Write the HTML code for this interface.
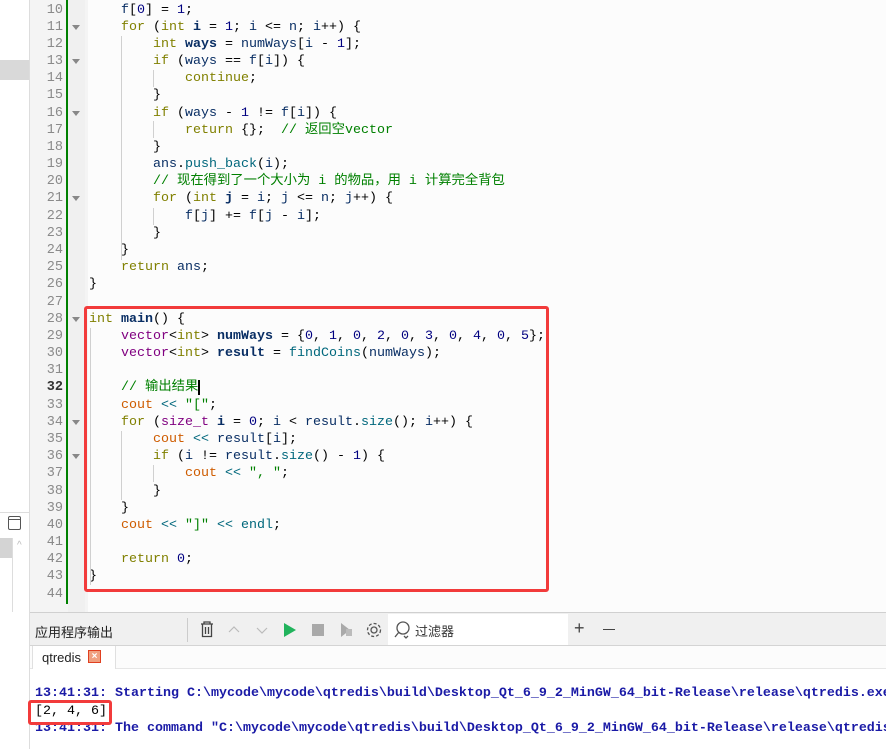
<!DOCTYPE html>
<html><head><meta charset="utf-8"><style>
body{margin:0;width:886px;height:749px;overflow:hidden;background:#fcfcfc;position:relative;font-family:"Liberation Sans","Noto Sans CJK SC",sans-serif}
.a{position:absolute}
.ln{position:absolute;left:30px;width:33px;text-align:right;font:13.5px "Liberation Mono",monospace;color:#8a8a8a;height:17px;line-height:17px}
.c{position:absolute;left:89px;white-space:pre;font:13.33px "Liberation Mono","Noto Sans CJK SC",monospace;color:#000;height:17px;line-height:17px}
.k{color:#808000}.v{color:#092e64}.b{color:#092e64;font-weight:bold}.n{color:#000080}.f{color:#00677c}.t{color:#800080}.o{color:#ce5c00}.s{color:#008000}.m{color:#008000}
.fold{position:absolute;left:72px;width:0;height:0;border-left:4px solid transparent;border-right:4px solid transparent;border-top:5px solid #888}
.g{position:absolute;width:1px;background:#d0d0d0}
.out{position:absolute;left:35px;white-space:pre;font:bold 13.33px "Liberation Mono",monospace;color:#1a1aa6}
</style></head><body>
<div class="a" style="left:0;top:0;width:29px;height:612px;background:#fff;border-right:1px solid #ddd"></div>
<div class="a" style="left:0;top:60px;width:29px;height:20px;background:#d9d9d9"></div>
<div class="a" style="left:0;top:512px;width:29px;height:1px;background:#ddd"></div>
<div class="a" style="left:8px;top:516px;width:11px;height:12px;border:1px solid #555;border-radius:2px"></div>
<div class="a" style="left:8px;top:519px;width:12px;height:1px;background:#555"></div>
<div class="a" style="left:0;top:538px;width:12px;height:20px;background:#d4d4d4"></div>
<div class="a" style="left:12px;top:538px;width:1px;height:74px;background:#ddd"></div>
<div class="a" style="left:17px;top:540px;font-size:10px;color:#bbb">^</div>
<div class="a" style="left:30px;top:0;width:58px;height:612px;background:#f4f4f4"></div>
<div class="a" style="left:66px;top:0;width:2px;height:604px;background:#008000"></div>
<div class="a" style="left:68px;top:0;width:17px;height:612px;background:#f0f0f0"></div>
<div class="a" style="left:0;top:612px;width:886px;height:1px;background:#d0d0d0"></div>

<div id="lines"></div>
<script>
var L=[
[10,'    <span class="v">f</span>[<span class="n">0</span>] = <span class="n">1</span>;'],
[11,'    <span class="k">for</span> (<span class="k">int</span> <span class="b">i</span> = <span class="n">1</span>; <span class="v">i</span> &lt;= <span class="v">n</span>; <span class="v">i</span>++) {',1],
[12,'        <span class="k">int</span> <span class="b">ways</span> = <span class="v">numWays</span>[<span class="v">i</span> - <span class="n">1</span>];'],
[13,'        <span class="k">if</span> (<span class="v">ways</span> == <span class="v">f</span>[<span class="v">i</span>]) {',1],
[14,'            <span class="k">continue</span>;'],
[15,'        }'],
[16,'        <span class="k">if</span> (<span class="v">ways</span> - <span class="n">1</span> != <span class="v">f</span>[<span class="v">i</span>]) {',1],
[17,'            <span class="k">return</span> {};  <span class="m">// 返回空vector</span>'],
[18,'        }'],
[19,'        <span class="v">ans</span>.<span class="f">push_back</span>(<span class="v">i</span>);'],
[20,'        <span class="m">// 现在得到了一个大小为 i 的物品，用 i 计算完全背包</span>'],
[21,'        <span class="k">for</span> (<span class="k">int</span> <span class="b">j</span> = <span class="v">i</span>; <span class="v">j</span> &lt;= <span class="v">n</span>; <span class="v">j</span>++) {',1],
[22,'            <span class="v">f</span>[<span class="v">j</span>] += <span class="v">f</span>[<span class="v">j</span> - <span class="v">i</span>];'],
[23,'        }'],
[24,'    }'],
[25,'    <span class="k">return</span> <span class="v">ans</span>;'],
[26,'}'],
[27,''],
[28,'<span class="k">int</span> <span class="b">main</span>() {',1],
[29,'    <span class="t">vector</span>&lt;<span class="k">int</span>&gt; <span class="b">numWays</span> = {<span class="n">0</span>, <span class="n">1</span>, <span class="n">0</span>, <span class="n">2</span>, <span class="n">0</span>, <span class="n">3</span>, <span class="n">0</span>, <span class="n">4</span>, <span class="n">0</span>, <span class="n">5</span>};'],
[30,'    <span class="t">vector</span>&lt;<span class="k">int</span>&gt; <span class="b">result</span> = <span class="f">findCoins</span>(<span class="v">numWays</span>);'],
[31,''],
[32,'    <span class="m">// 输出结果</span><span style="border-left:2px solid #000;margin-left:0"></span>'],
[33,'    <span class="o">cout</span> <span class="f">&lt;&lt;</span> <span class="s">"["</span>;'],
[34,'    <span class="k">for</span> (<span class="t">size_t</span> <span class="b">i</span> = <span class="n">0</span>; <span class="v">i</span> &lt; <span class="v">result</span>.<span class="f">size</span>(); <span class="v">i</span>++) {',1],
[35,'        <span class="o">cout</span> <span class="f">&lt;&lt;</span> <span class="v">result</span>[<span class="v">i</span>];'],
[36,'        <span class="k">if</span> (<span class="v">i</span> != <span class="v">result</span>.<span class="f">size</span>() - <span class="n">1</span>) {',1],
[37,'            <span class="o">cout</span> <span class="f">&lt;&lt;</span> <span class="s">", "</span>;'],
[38,'        }'],
[39,'    }'],
[40,'    <span class="o">cout</span> <span class="f">&lt;&lt;</span> <span class="s">"]"</span> <span class="f">&lt;&lt;</span> <span class="f">endl</span>;'],
[41,''],
[42,'    <span class="k">return</span> <span class="n">0</span>;'],
[43,'}'],
[44,'']];
var h='';
L.forEach(function(l){var t=1.5+(l[0]-10)*17.18;
h+='<div class="ln" style="top:'+t+'px;'+(l[0]==32?'color:#333;font-weight:bold':'')+'">'+l[0]+'</div>';
h+='<div class="c" style="top:'+t+'px">'+l[1]+'</div>';
if(l[2])h+='<div class="fold" style="top:'+(t+6)+'px"></div>';});
document.getElementById('lines').outerHTML=h;
</script>
<div class="g" style="left:121px;top:36px;height:224px"></div>
<div class="g" style="left:153px;top:70px;height:17px"></div>
<div class="g" style="left:153px;top:121px;height:17px"></div>
<div class="g" style="left:153px;top:208px;height:17px"></div>
<div class="g" style="left:90px;top:328px;height:257px"></div>
<div class="g" style="left:121px;top:431px;height:69px"></div>
<div class="g" style="left:153px;top:465px;height:17px"></div>
<div class="a" style="left:84px;top:306px;width:459px;height:280px;border:3px solid #f23b3b;border-radius:3px"></div>

<div class="a" style="left:30px;top:613px;width:856px;height:32px;background:#f0f0f0;border-bottom:1px solid #d4d4d4"></div>
<div class="a" style="left:35px;top:622px;font-size:13px;color:#222">应用程序输出</div>
<div class="a" style="left:187px;top:618px;width:1px;height:24px;background:#ccc"></div>
<svg class="a" style="left:198px;top:620px" width="190" height="20">
<g fill="none" stroke="#444" stroke-width="1.3"><path d="M3 4h12M6 4V2h6v2M4.5 4.5v12h9v-12M7.5 7v7M10.5 7v7"/></g>
<path d="M31 12l5-5 5 5M59 8l5 5 5-5" fill="none" stroke="#bbb" stroke-width="1.2"/>
<path d="M86 3v14l12-7z" fill="#21b35c"/>
<rect x="114" y="4" width="12" height="12" fill="#a9a9a9"/>
<path d="M143 3v14l9-7z" fill="#a9a9a9"/><rect x="148" y="9" width="6" height="7" fill="#bbb"/>
<g fill="none" stroke="#555" stroke-width="1.3"><circle cx="176" cy="10" r="3"/><circle cx="176" cy="10" r="6.5" stroke-dasharray="3 2"/></g>
</svg>
<div class="a" style="left:388px;top:614px;width:180px;height:31px;background:#fff"></div>
<svg class="a" style="left:393px;top:620px" width="18" height="20"><circle cx="10" cy="8" r="6" fill="none" stroke="#555" stroke-width="1.3"/><path d="M6 12l-4 5M11 16l2 2 2-2" fill="none" stroke="#555" stroke-width="1.3"/></svg>
<div class="a" style="left:415px;top:621px;font-size:13px;color:#333">过滤器</div>
<div class="a" style="left:574px;top:618px;font-size:18px;color:#444;line-height:20px">+</div>
<div class="a" style="left:603px;top:629px;width:12px;height:1px;background:#444"></div>
<div class="a" style="left:30px;top:646px;width:856px;height:22px;background:#fcfcfc;border-bottom:1px solid #e6e6e6"></div>
<div class="a" style="left:32px;top:646px;width:82px;height:23px;background:#fff;border-left:1px solid #e0e0e0;border-right:1px solid #e0e0e0"></div>
<div class="a" style="left:42px;top:650px;font-size:13px;color:#222">qtredis</div>
<div class="a" style="left:88px;top:650px;width:11px;height:11px;background:#f0a080;border:1px solid #e04020;color:#fff;font-size:10px;line-height:11px;text-align:center;font-weight:bold">×</div>
<div class="a" style="left:0;top:669px;width:886px;height:80px;background:#fff;overflow:hidden">
<div class="out" style="top:17px">13:41:31: Starting C:\mycode\mycode\qtredis\build\Desktop_Qt_6_9_2_MinGW_64_bit-Release\release\qtredis.exe</div>
<div class="out" style="top:35px;font-weight:normal;color:#000">[2, 4, 6]</div>
<div class="out" style="top:52px">13:41:31: The command "C:\mycode\mycode\qtredis\build\Desktop_Qt_6_9_2_MinGW_64_bit-Release\release\qtredis.exe"</div>
</div>
<div class="a" style="left:0;top:612px;width:29px;height:137px;background:#fff;border-right:1px solid #ddd"></div>
<div class="a" style="left:28px;top:700px;width:78px;height:19px;border:3px solid #f23b3b;border-radius:3px"></div>
</body></html>
